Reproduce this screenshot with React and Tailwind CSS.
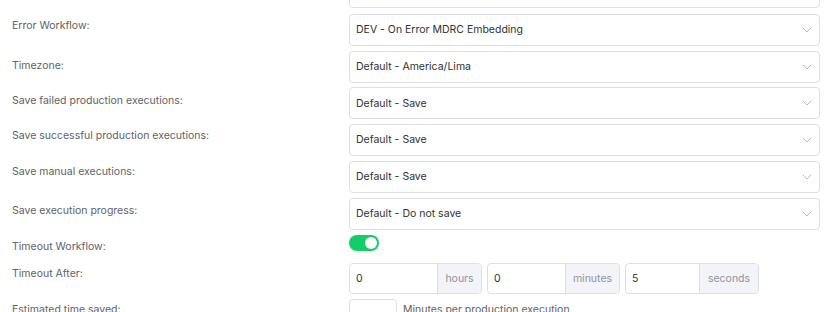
import { useState } from "react";

function Chevron() {
  return (
    <svg width="10" height="6" viewBox="0 0 10 6" fill="none" className="shrink-0">
      <path d="M1 1l4 4 4-4" stroke="#b4b8c0" strokeWidth="1" strokeLinecap="round" strokeLinejoin="round" />
    </svg>
  );
}

function Select({ value }) {
  return (
    <div className="flex h-[32px] items-center justify-between rounded-[4px] border border-[#dcdfe6] bg-white pl-[6px] pr-[7px] text-[10.5px] text-[#303133]">
      <span>{value}</span>
      <Chevron />
    </div>
  );
}

function Row({ label, children, labelTop = "pt-[5px]", className = "" }) {
  return (
    <div className={`flex ${className}`}>
      <div className={`w-[337px] shrink-0 text-[10.5px] leading-[16px] text-[#606266] ${labelTop}`}>{label}</div>
      <div className="flex-1">{children}</div>
    </div>
  );
}

function TimeInput({ value, unit, inputW, unitW }) {
  return (
    <div className="flex h-[31px] overflow-hidden rounded-[4px] border border-[#dcdfe6] bg-white text-[10.5px]">
      <div className={`flex items-center px-[6px] text-[#303133] ${inputW}`}>{value}</div>
      <div className={`flex items-center justify-center border-l border-[#dcdfe6] bg-[#f3f4f9] text-[#909399] ${unitW}`}>{unit}</div>
    </div>
  );
}

export default function App() {
  const [on] = useState(true);
  const selects = [
    ["Error Workflow:", "DEV - On Error MDRC Embedding", "pt-[4px]"],
    ["Timezone:", "Default - America/Lima", "pt-[7px]"],
    ["Save failed production executions:", "Default - Save", "pt-[6px]"],
    ["Save successful production executions:", "Default - Save", "pt-[4px]"],
    ["Save manual executions:", "Default - Save", "pt-[3px]"],
    ["Save execution progress:", "Default - Do not save", "pt-[5px]"],
  ];
  return (
    <div className="h-[312px] w-[834px] overflow-hidden bg-white font-['Inter','Noto_Sans',sans-serif]">
      <div className="mt-[-24px] flex flex-col gap-[4.8px] pl-[12px] pr-[14px]">
        <Row label="" className="mb-[1px]">
          <Select value="" />
        </Row>
        {selects.map(([label, value, pt]) => (
          <Row key={label} label={label} labelTop={pt}>
            <Select value={value} />
          </Row>
        ))}
        <Row label="Timeout Workflow:" labelTop="pt-[4px]" className="h-[24px]">
          <div className={`flex h-[16px] w-[30px] items-center rounded-full px-[2px] ${on ? "justify-end bg-[#13ce66]" : "bg-[#dcdfe6]"}`}>
            <div className="h-[12px] w-[12px] rounded-full bg-white" />
          </div>
        </Row>
        <Row label="Timeout After:" labelTop="pt-[3px]">
          <div className="flex gap-[5px]">
            <TimeInput value="0" unit="hours" inputW="w-[87px]" unitW="w-[44px]" />
            <TimeInput value="0" unit="minutes" inputW="w-[77px]" unitW="w-[54px]" />
            <TimeInput value="5" unit="seconds" inputW="w-[73px]" unitW="w-[59px]" />
          </div>
        </Row>
        <Row label="Estimated time saved:" labelTop="pt-[3px]">
          <div className="flex items-start gap-[6px]">
            <div className="h-[31px] w-[48px] shrink-0 rounded-[4px] border border-[#dcdfe6] bg-white" />
            <span className="pt-[3px] text-[10.5px] leading-[16px] text-[#606266]">Minutes per production execution</span>
          </div>
        </Row>
      </div>
    </div>
  );
}
